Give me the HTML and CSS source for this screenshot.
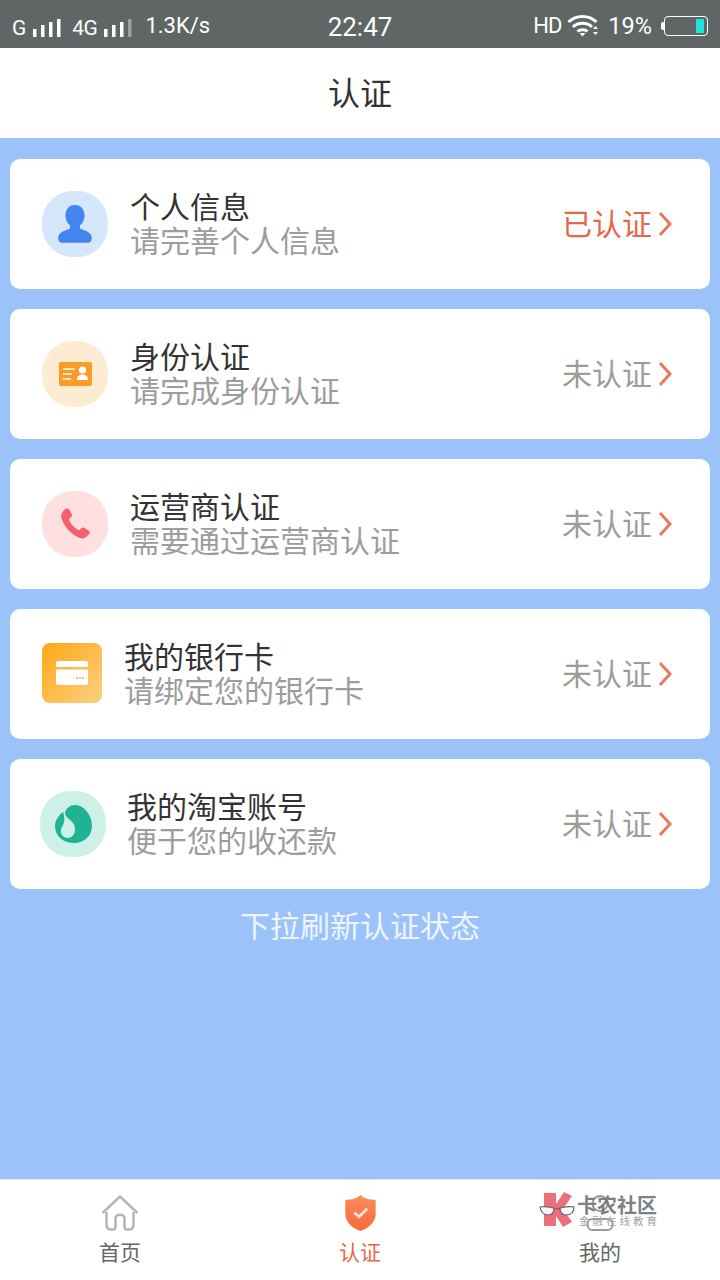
FILE: index.html
```html
<!DOCTYPE html>
<html lang="zh-CN">
<head>
<meta charset="utf-8">
<title>认证</title>
<link rel="stylesheet" href="styles.css">
</head>
<body>
<div class="app">
  <div class="statusbar">
    <div class="sb-left">
      <span class="sb-net">G</span>
      <svg class="sb-signal" width="28" height="18" viewBox="0 0 28 18"><g fill="#fff"><rect x="0" y="10" width="3.500" height="8"/><rect x="8" y="6" width="3.500" height="12"/><rect x="16" y="3" width="3.500" height="15"/><rect x="24" y="0" width="3.500" height="18"/></g></svg>
      <span class="sb-net sb-4g">4G</span>
      <svg class="sb-signal" width="28" height="18" viewBox="0 0 28 18"><g fill="#fff"><rect x="0" y="10" width="3.500" height="8"/><rect x="8" y="6" width="3.500" height="12"/><rect x="16" y="3" width="3.500" height="15"/></g><rect x="24" y="0" width="3.500" height="18" fill="#9ba1a0"/></svg>
      <span class="sb-speed">1.3K/s</span>
    </div>
    <div class="sb-time">22:47</div>
    <div class="sb-right">
      <span class="sb-hd">HD</span>
      <svg class="sb-wifi" width="33" height="23" viewBox="0 0 33 23" fill="none" stroke="#fff" stroke-width="3"><path d="M1.500 8 C9 0.500 22 0.500 29.500 8"/><path d="M6 13 C11 8 20 8 25 13"/><path d="M10.500 17.500 C13 15 18 15 20.500 17.500"/><path d="M12.500 19 L15.500 22.500 L18.500 19 Z" fill="#fff" stroke="none"/><path d="M26 15 L28.500 12 L31 15 Z M26 18 L31 18 L28.500 21 Z" fill="#fff" stroke="none"/></svg>
      <span class="sb-pct">19%</span>
      <div class="battery"><div class="battery-cap"></div><div class="battery-body"><div class="battery-level"></div></div></div>
    </div>
  </div>

  <header class="header">认证</header>

  <main class="content">
    <section class="card">
      <div class="badge badge-blue">
        <svg width="34" height="38" viewBox="0 0 34 38"><path fill="#4285ee" d="M17 0C10.500 0 7.500 5 7.500 10.500C7.500 15 9.500 18.500 12 20.500L12 23.500C8 25.500 0.500 26.500 0.200 33C0.100 36 1.500 37.800 4 37.800L30 37.800C32.500 37.800 33.900 36 33.800 33C33.500 26.500 26 25.500 22 23.500L22 20.500C24.500 18.500 26.500 15 26.500 10.500C26.500 5 23.500 0 17 0Z"/></svg>
      </div>
      <div class="info">
        <div class="title">个人信息</div>
        <div class="hint">请完善个人信息</div>
      </div>
      <div class="state state-done">已认证</div>
      <svg class="chev" width="14" height="26" viewBox="0 0 14 26" fill="none"><path d="M2 2L12 13L2 24" stroke="#e8795a" stroke-width="3"/></svg>
    </section>

    <section class="card">
      <div class="badge badge-orange">
        <svg width="33" height="24" viewBox="0 0 33 24"><rect width="33" height="24" rx="2" fill="#f89c27"/><g fill="#fde3bd"><rect x="4" y="6" width="12" height="2"/><rect x="4" y="11" width="9" height="2"/><rect x="4" y="16" width="8" height="2"/></g><circle cx="23.500" cy="8" r="3.600" fill="#fff"/><path d="M18 18C18 14 20.500 12.500 23.500 12.500C26.500 12.500 29 14 29 18Z" fill="#fff"/></svg>
      </div>
      <div class="info">
        <div class="title">身份认证</div>
        <div class="hint">请完成身份认证</div>
      </div>
      <div class="state">未认证</div>
      <svg class="chev" width="14" height="26" viewBox="0 0 14 26" fill="none"><path d="M2 2L12 13L2 24" stroke="#e8795a" stroke-width="3"/></svg>
    </section>

    <section class="card">
      <div class="badge badge-red">
        <svg width="29" height="31" viewBox="0 0 30 32"><path fill="#f4606f" d="M4 1.500C5.500 0.300 7.500 0 8.500 1.500L11 6C11.800 7.500 11.300 8.800 10 9.800L8.800 10.800C8.300 11.300 8.300 12 8.700 12.800C10.500 16.500 13.800 20.300 17.500 22.500C18.300 23 19 22.900 19.500 22.400L20.800 21C21.800 20 23 19.800 24.300 20.600L28.500 23.300C29.800 24.200 30 25.800 28.800 27.200C26.500 30 23.800 32.300 20.500 31.300C11.500 28.500 3.300 19.500 0.500 10.500C-0.500 7 1.500 3.500 4 1.500Z"/></svg>
      </div>
      <div class="info">
        <div class="title">运营商认证</div>
        <div class="hint">需要通过运营商认证</div>
      </div>
      <div class="state">未认证</div>
      <svg class="chev" width="14" height="26" viewBox="0 0 14 26" fill="none"><path d="M2 2L12 13L2 24" stroke="#e8795a" stroke-width="3"/></svg>
    </section>

    <section class="card">
      <div class="badge badge-card">
        <svg width="32" height="24" viewBox="0 0 32 24"><path fill="#fff" d="M2 0H30A2 2 0 0 1 32 2V6H0V2A2 2 0 0 1 2 0Z"/><path fill="#fff" d="M0 8.500H32V22A2 2 0 0 1 30 24H2A2 2 0 0 1 0 22Z"/><g fill="#f8c16d"><rect x="20" y="16" width="2" height="2"/><rect x="23" y="16" width="2" height="2"/><rect x="26" y="16" width="2" height="2"/></g></svg>
      </div>
      <div class="info">
        <div class="title">我的银行卡</div>
        <div class="hint">请绑定您的银行卡</div>
      </div>
      <div class="state">未认证</div>
      <svg class="chev" width="14" height="26" viewBox="0 0 14 26" fill="none"><path d="M2 2L12 13L2 24" stroke="#e8795a" stroke-width="3"/></svg>
    </section>

    <section class="card">
      <div class="badge badge-green">
        <svg width="37" height="38" viewBox="0 0 37 38"><path fill="#1fb394" d="M10 8C11 3 15 0 20 0C29 0 37 10 37 21C37 31 29 38 19 38C8 38 0 31 0 21C0 15 4 10 8 7Z"/><path fill="#cdf1e8" d="M8 7L10 8C10 12 15 14 18 18C22 23 20 33 13 33C7 33 4 27 7 22C9 19 10.500 14 8 7Z"/></svg>
      </div>
      <div class="info info-tb">
        <div class="title">我的淘宝账号</div>
        <div class="hint">便于您的收还款</div>
      </div>
      <div class="state">未认证</div>
      <svg class="chev" width="14" height="26" viewBox="0 0 14 26" fill="none"><path d="M2 2L12 13L2 24" stroke="#e8795a" stroke-width="3"/></svg>
    </section>

    <p class="pull">下拉刷新认证状态</p>
  </main>

  <nav class="tabbar">
    <div class="tab">
      <svg width="38" height="36" viewBox="0 0 38 36" fill="none" stroke="#b5b5b5" stroke-width="2.500" stroke-linejoin="round"><path d="M1.500 18L19 1.500L36.500 18"/><path d="M5.500 17V29C5.500 33 7 34.500 9.500 34.500H12C14 34.500 14.500 33.500 14.500 31.500V23C14.500 18.500 23.500 18.500 23.500 23V31.500C23.500 33.500 24 34.500 26 34.500H28.500C31 34.500 32.500 33 32.500 29V17"/></svg>
      <span class="tab-label">首页</span>
    </div>
    <div class="tab tab-active">
      <svg width="31" height="36" viewBox="0 0 32 38"><defs><linearGradient id="shield" x1="0" y1="0" x2="0" y2="1"><stop offset="0" stop-color="#f98d5c"/><stop offset="1" stop-color="#f66a3c"/></linearGradient></defs><path fill="url(#shield)" d="M16 0C19 3 24 5 31 5C31.500 5 32 5.500 32 6V20C32 29 24 35 16 38C8 35 0 29 0 20V6C0 5.500 0.500 5 1 5C8 5 13 3 16 0Z"/><path d="M9.500 18.500L14.500 23L23 14.500" fill="none" stroke="#fde3d5" stroke-width="3"/></svg>
      <span class="tab-label">认证</span>
    </div>
    <div class="tab">
      <svg width="32" height="36" viewBox="0 0 32 36" fill="none" stroke="#9a9a9a" stroke-width="2"><circle cx="16" cy="8.500" r="7.500"/><rect x="3.500" y="24" width="25" height="11" rx="5"/></svg>
      <span class="tab-label">我的</span>
    </div>
    <div class="watermark">
      <svg class="wm-logo" width="38" height="36" viewBox="0 0 38 36"><path fill="#ee6f7c" d="M5 1H17V12L25 0L33 4L24 17L33 30L24 35L17 24V34H5Z"/><g fill="#fff" fill-opacity="0.9" stroke="#666" stroke-width="1.200"><path d="M1 15C5 14 10 15 15 16C15 20 14 23 9 23C5 23 2 20 1 15Z"/><path d="M21 16C26 15 31 14 35 15C35 20 32 23 27 23C23 23 21 20 21 16Z"/></g><path d="M15 17C17 16 19 16 21 17" fill="none" stroke="#666" stroke-width="1.200"/></svg>
      <div class="wm-text">
        <div class="wm-name">卡农社区</div>
        <div class="wm-sub">金融在线教育</div>
      </div>
    </div>
  </nav>
</div>
</body>
</html>
```

FILE: styles.css
```css
* { box-sizing: border-box; }
html, body { margin: 0; padding: 0; }
body {
  width: 720px;
  height: 1280px;
  overflow: hidden;
  font-family: "Noto Sans CJK SC", "Noto Sans", sans-serif;
  background: #9bc3f9;
}
.app { width: 720px; height: 1280px; display: flex; flex-direction: column; }

.statusbar {
  height: 48px;
  flex: none;
  background: #5f6665;
  color: #fff;
  display: grid;
  grid-template-columns: 1fr auto 1fr;
  align-items: center;
  font-family: Roboto, "Liberation Sans", sans-serif;
}
.sb-left { display: flex; align-items: center; padding-left: 12px; }
.sb-net { font-size: 21px; line-height: 24px; margin-top: 4px; }
.sb-4g { margin-left: 11px; font-size: 21px; letter-spacing: -0.500px; }
.sb-signal { margin-left: 7px; margin-top: 4px; }
.sb-speed { margin-left: 13px; font-size: 22px; line-height: 24px; }
.sb-time { font-size: 26px; font-weight: 400; line-height: 48px; margin-top: 3px; }
.sb-right { display: flex; align-items: center; justify-content: flex-end; padding-right: 12px; }
.sb-hd { font-size: 22px; letter-spacing: -1px; }
.sb-wifi { margin-left: 6px; }
.sb-pct { margin-left: 8px; font-size: 23.500px; }
.battery { display: flex; align-items: center; margin-left: 9px; }
.battery-cap { width: 3px; height: 8px; background: #fff; border-radius: 2px 0 0 2px; }
.battery-body {
  width: 44px;
  height: 20px;
  border: 1.500px solid #fff;
  border-radius: 4px;
  display: flex;
  justify-content: flex-end;
  padding: 2px 3px;
}
.battery-level { width: 8px; background: #1fe6dc; }

.header {
  height: 90px;
  flex: none;
  background: #fff;
  color: #333;
  font-size: 32px;
  line-height: 86px;
  text-align: center;
}

.content {
  flex: 1;
  padding: 21px 10px 0;
  display: flex;
  flex-direction: column;
  gap: 20px;
}
.card {
  height: 130px;
  flex: none;
  background: #fff;
  border-radius: 10px;
  padding: 0 38px 0 32px;
  display: flex;
  align-items: center;
}
.badge {
  width: 66px;
  height: 66px;
  flex: none;
  margin-bottom: 1px;
  border-radius: 31px;
  display: flex;
  align-items: center;
  justify-content: center;
}
.badge-blue { background: #d6e7fb; }
.badge-orange { background: #fdecd2; }
.badge-red { background: #fde0df; }
.badge-green { background: #cdf1e8; margin-left: -2px; }
.badge-card {
  width: 60px;
  height: 60px;
  margin-bottom: 2px;
  border-radius: 8px;
  background: linear-gradient(135deg, #ffa715, #fbd082);
}
.info { flex: 1; margin-left: 22px; padding-bottom: 5px; }
.info-tb { margin-left: 21px; }
.title { font-size: 30px; line-height: 34px; color: #333; }
.hint { font-size: 30px; line-height: 34px; color: #9c9c9c; }
.state { font-size: 30px; color: #9c9c9c; line-height: 40px; padding-bottom: 4px; }
.state-done { color: #e2694a; }
.chev { margin-left: 6px; flex: none; }

.pull {
  margin: -5px 0 0;
  font-size: 30px;
  line-height: 40px;
  color: #eef5ff;
  text-align: center;
}

.tabbar {
  height: 101px;
  flex: none;
  background: #fff;
  border-top: 1px solid #e4e8ee;
  display: grid;
  grid-template-columns: repeat(3, 1fr);
  position: relative;
}
.tab {
  display: flex;
  flex-direction: column;
  align-items: center;
  padding-top: 15px;
  gap: 4px;
}
.tab svg { flex: none; }
.tab-label { font-size: 21px; line-height: 32px; color: #666; }
.tab-active .tab-label { color: #e2694a; }

.watermark {
  position: absolute;
  left: 539px;
  top: 12px;
  display: flex;
  align-items: flex-start;
}
.wm-text { padding-top: 3px; }
.wm-name { font-size: 20px; line-height: 20px; font-weight: 700; color: #6f7478; opacity: 0.9; }
.wm-sub { font-size: 10.500px; line-height: 12px; letter-spacing: 3px; margin-left: 2px; color: #a0a4a8; }
```
